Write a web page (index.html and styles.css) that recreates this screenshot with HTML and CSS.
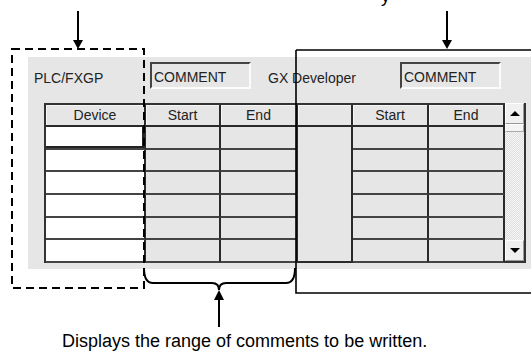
FILE: index.html
```html
<!DOCTYPE html>
<html lang="en">

<head>
  <meta charset="UTF-8">
  <title>Comment Range</title>
  <link rel="stylesheet" href="styles.css">
</head>

<body>
  <div class="page">
    <span class="cutText">y</span>

    <div class="panel">
      <div class="topRow">
        <span class="label plc">PLC/FXGP</span>
        <div class="commentBox">COMMENT</div>
        <span class="label gx">GX Developer</span>
        <div class="commentBox">COMMENT</div>
      </div>

      <div class="grid">
        <div class="head">Device</div>
        <div class="head">Start</div>
        <div class="head">End</div>
        <div class="head"></div>
        <div class="head">Start</div>
        <div class="head">End</div>

        <div class="scroll">
          <div class="btn"><span class="tri up"></span></div>
          <div class="thumb"></div>
          <div class="track"></div>
          <div class="btn"><span class="tri down"></span></div>
        </div>

        <div class="blank"></div>

        <div class="cell dev focus"></div><div class="cell"></div><div class="cell"></div><div class="cell r1"></div><div class="cell r2"></div>
        <div class="cell dev"></div><div class="cell"></div><div class="cell"></div><div class="cell r1"></div><div class="cell r2"></div>
        <div class="cell dev"></div><div class="cell"></div><div class="cell"></div><div class="cell r1"></div><div class="cell r2"></div>
        <div class="cell dev"></div><div class="cell"></div><div class="cell"></div><div class="cell r1"></div><div class="cell r2"></div>
        <div class="cell dev"></div><div class="cell"></div><div class="cell"></div><div class="cell r1"></div><div class="cell r2"></div>
        <div class="cell dev"></div><div class="cell"></div><div class="cell"></div><div class="cell r1"></div><div class="cell r2"></div>
      </div>
    </div>

    <p class="caption">Displays the range of comments to be written.</p>

    <!-- callout lines drawn over the dialog -->
    <svg class="marks" width="531" height="356" viewBox="0 0 531 356">
      <line x1="78" y1="11" x2="78" y2="41" stroke="#000" stroke-width="2" />
      <polygon points="73,40 83,40 78,49" fill="#000" />
      <line x1="447" y1="11" x2="447" y2="41" stroke="#000" stroke-width="2" />
      <polygon points="442,40 452,40 447,49" fill="#000" />

      <rect x="12" y="49" width="132" height="239" fill="none" stroke="#000" stroke-width="2" stroke-dasharray="8 5" />
      <path d="M296 50 H540 M296 50 V293 H540" fill="none" stroke="#000" stroke-width="1.6" />

      <path d="M144 268 Q144 283 153 283 H212 Q219 283 219 290 Q219 283 226 283 H286 Q295 283 295 268" fill="none" stroke="#000" stroke-width="2" />
      <line x1="219" y1="299" x2="219" y2="327" stroke="#000" stroke-width="2" />
      <polygon points="214,300 224,300 219,290" fill="#000" />
    </svg>
  </div>
</body>

</html>
```

FILE: styles.css
```css
body {
  margin: 0;
  background-color: white;
  font-family: "Liberation Sans", Arial, sans-serif;
  color: #222;
}

.page {
  position: relative;
  width: 531px;
  height: 356px;
  overflow: hidden;
}

.cutText {
  position: absolute;
  left: 381px;
  top: -14px;
  font-size: 18px;
  color: #000;
}

.panel {
  margin-left: 28px;
  padding-top: 5px;
  padding-left: 6px;
  position: relative;
  top: 57px;
  width: 497px;
  height: 207px;
  background-color: #e6e6e6;
}

.topRow {
  display: flex;
  height: 27px;
  font-size: 14px;
  line-height: 16px;
}

.label {
  height: 27px;
  padding-top: 8px;
  box-sizing: border-box;
}

.plc {
  width: 116px;
}

.gx {
  margin-left: 17px;
  width: 132px;
}

.commentBox {
  width: 101px;
  height: 27px;
  box-sizing: border-box;
  padding: 5px 0 0 2px;
  border-top: 2px solid #444;
  border-left: 2px solid #444;
  border-right: 2px solid #fbfbfb;
  border-bottom: 2px solid #fbfbfb;
}

.grid {
  display: grid;
  grid-template-columns: 100px 75px 77px 55px 76px 76px 21px;
  grid-template-rows: 22px repeat(6, 1fr);
  height: 158px;
  width: 480px;
  margin-top: 14px;
  margin-left: 10px;
  border-top: 2px solid #333;
  border-left: 2px solid #333;
  font-size: 14px;
}

.head {
  border-right: 2px solid #2a2a2a;
  border-bottom: 2px solid #2a2a2a;
  text-align: center;
  line-height: 20px;
  box-shadow: inset 1px 1px 0 #f6f6f6;
}

.cell {
  border-right: 2px solid #2a2a2a;
  border-bottom: 2px solid #444;
}

.dev {
  grid-column: 1;
  background-color: white;
}

.focus {
  box-shadow: inset -2px -2px 0 #222, inset 2px 2px 0 #fff;
}

.r1 {
  grid-column: 5;
}

.r2 {
  grid-column: 6;
}

.blank {
  grid-column: 4;
  grid-row: 2 / 8;
  border-right: 2px solid #2a2a2a;
  border-bottom: 2px solid #2a2a2a;
}

.scroll {
  grid-column: 7;
  grid-row: 1 / 8;
  display: flex;
  flex-direction: column;
  margin-top: -2px;
  border-right: 2px solid #333;
  border-bottom: 2px solid #333;
}

.btn {
  height: 19px;
  display: flex;
  align-items: center;
  justify-content: center;
  background-color: #f0f0f0;
  border-top: 1px solid #fff;
  border-left: 1px solid #fff;
  border-right: 1px solid #999;
  border-bottom: 1px solid #999;
}

.thumb {
  height: 6px;
  background-color: #f4f4f4;
  border: 1px solid #aaa;
  border-top-color: #fff;
  border-left-color: #fff;
}

.track {
  flex: 1;
  background: repeating-conic-gradient(#f7f7f7 0 25%, #dedede 0 50%) 0 0 / 2px 2px;
}

.tri {
  width: 0;
  height: 0;
  border-left: 5px solid transparent;
  border-right: 5px solid transparent;
}

.tri.up {
  border-bottom: 5px solid #000;
}

.tri.down {
  border-top: 5px solid #000;
}

.caption {
  position: absolute;
  top: 331px;
  left: 62px;
  margin: 0;
  font-size: 18px;
  line-height: 21px;
  color: #000;
}

.marks {
  position: absolute;
  left: 0;
  top: 0;
  pointer-events: none;
}
```
